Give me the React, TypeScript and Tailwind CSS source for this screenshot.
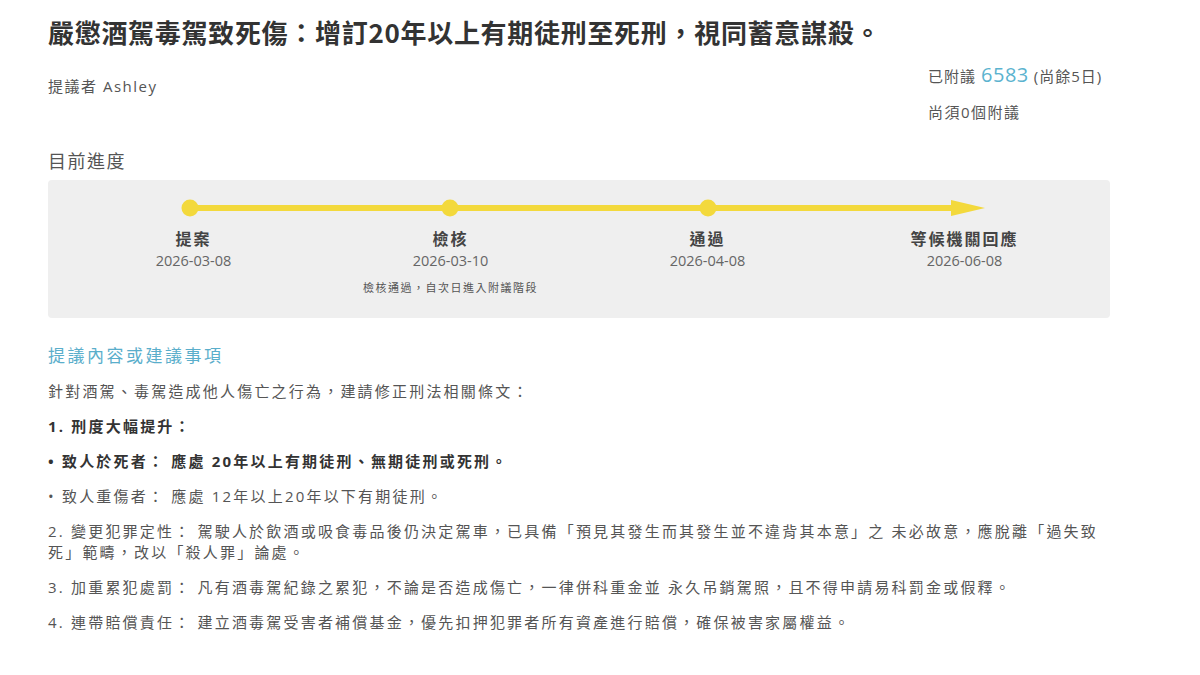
import React from "react";

const FONT = { fontFamily: '"Open Sans", "Noto Sans CJK TC", sans-serif' };

type Stage = { name: string; date: string; note?: string };

const stages: Stage[] = [
  { name: "提案", date: "2026-03-08" },
  { name: "檢核", date: "2026-03-10", note: "檢核通過，自次日進入附議階段" },
  { name: "通過", date: "2026-04-08" },
  { name: "等候機關回應", date: "2026-06-08" },
];

// Yellow progress track with stage dots and an arrow at the end
function ProgressTrack() {
  const color = "#f3d93c";
  return (
    <svg width="1028" height="20" viewBox="0 0 1028 20" className="block">
      <line x1="125" y1="10" x2="890" y2="10" stroke={color} strokeWidth="6" />
      <polygon points="886,2 920,10 886,18" fill={color} />
      <circle cx="125" cy="10" r="8.5" fill={color} />
      <circle cx="385" cy="10" r="8.5" fill={color} />
      <circle cx="643" cy="10" r="8.5" fill={color} />
    </svg>
  );
}

function Timeline() {
  return (
    <div className="rounded-[4px] bg-[#efefef] px-[17px] pb-[23px] pt-[18px]">
      <ProgressTrack />
      <div className="mt-[10px] grid grid-cols-4">
        {stages.map((s) => (
          <div key={s.name} className="flex flex-col items-center">
            <div className="text-[16px] font-bold leading-[22px] tracking-[2px] text-[#444]">{s.name}</div>
            <div className="text-[14.5px] leading-[21px] text-[#666]">{s.date}</div>
            {s.note && (
              <div className="mt-[9px] text-[11px] leading-[15px] tracking-[1.5px] text-[#555]">{s.note}</div>
            )}
          </div>
        ))}
      </div>
    </div>
  );
}

export default function App() {
  return (
    <div className="min-h-[675px] w-[1200px] bg-white pl-[48px] pt-[15px]" style={FONT}>
      <div className="w-[1062px]">
        <h1
          className="text-[26px] font-bold leading-[34px] tracking-[0.7px] text-[#333]"
          style={{ fontFamily: '"Noto Sans CJK TC", sans-serif' }}
        >
          嚴懲酒駕毒駕致死傷：增訂20年以上有期徒刑至死刑，視同蓄意謀殺。
        </h1>

        <div className="mt-[14px] flex items-start justify-between">
          <div className="mt-[12px] text-[15px] leading-[22px] tracking-[1.5px] text-[#555]">提議者 Ashley</div>
          <div className="w-[182px] text-[#555]">
            <div className="flex items-baseline whitespace-nowrap text-[15px] leading-[24px] tracking-[1px]">
              <span>已附議</span>
              <span className="ml-[5px] text-[20px] tracking-[0.5px] text-[#5bb3cf]">6583</span>
              <span className="ml-[5px]">(尚餘5日)</span>
            </div>
            <div className="mt-[14px] text-[15px] leading-[20px] tracking-[1.5px]">尚須0個附議</div>
          </div>
        </div>

        <div className="mt-[26px] text-[18px] leading-[26px] tracking-[1.5px] text-[#555]">目前進度</div>
        <div className="mt-[6px]">
          <Timeline />
        </div>

        <h2 className="mt-[26px] text-[17px] leading-[24px] tracking-[2.5px] text-[#5aaecb]">提議內容或建議事項</h2>

        <div className="mt-[13px] flex flex-col gap-[14px] text-[15px] leading-[21px] tracking-[2.2px] text-[#555]">
          <p>針對酒駕、毒駕造成他人傷亡之行為，建請修正刑法相關條文：</p>
          <p className="font-bold text-[#333]">1. 刑度大幅提升：</p>
          <p className="font-bold text-[#333]">• 致人於死者： 應處 20年以上有期徒刑、無期徒刑或死刑。</p>
          <p>• 致人重傷者： 應處 12年以上20年以下有期徒刑。</p>
          <p>
            2. 變更犯罪定性： 駕駛人於飲酒或吸食毒品後仍決定駕車，已具備「預見其發生而其發生並不違背其本意」之
            未必故意，應脫離「過失致死」範疇，改以「殺人罪」論處。
          </p>
          <p>3. 加重累犯處罰： 凡有酒毒駕紀錄之累犯，不論是否造成傷亡，一律併科重金並 永久吊銷駕照，且不得申請易科罰金或假釋。</p>
          <p>4. 連帶賠償責任： 建立酒毒駕受害者補償基金，優先扣押犯罪者所有資產進行賠償，確保被害家屬權益。</p>
        </div>
      </div>
    </div>
  );
}
